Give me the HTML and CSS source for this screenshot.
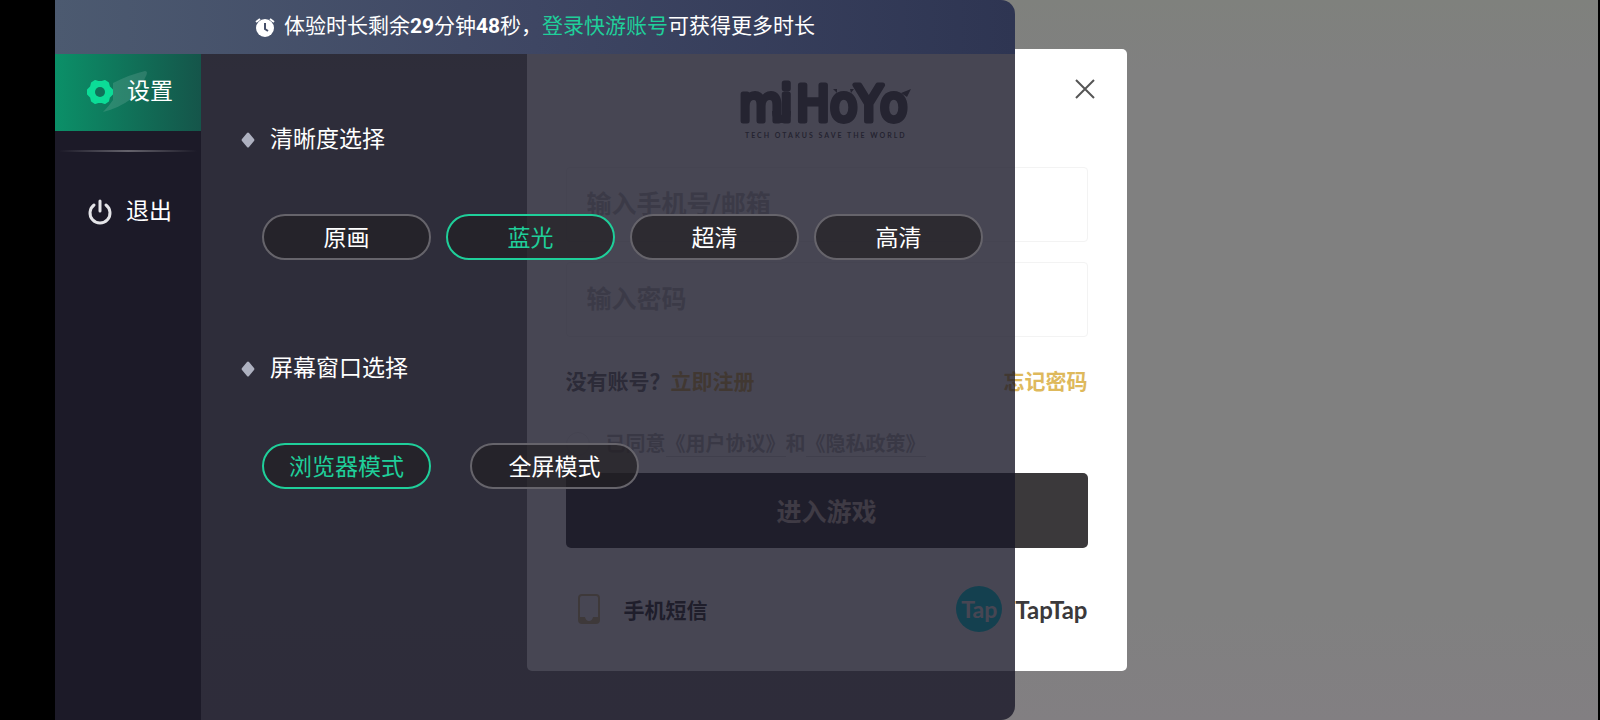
FILE: index.html
```html
<!DOCTYPE html>
<html lang="zh-CN">
<head>
    <meta charset="UTF-8">
    <meta name="viewport" content="width=device-width, initial-scale=1.0">
    <title>云游戏 - 设置</title>
    <link rel="stylesheet" href="styles.css">
</head>
<body>
    <!-- Login dialog, dimmed by the settings drawer -->
    <main class="stage">
        <form class="login">
            <div class="login-head">
                <svg class="logo" viewBox="0 0 176 68" width="176" height="68" role="img" aria-label="miHoYo">
                    <g class="logo-word">
                        <text x="0" y="48">m</text>
                        <text x="41" y="48">i</text>
                        <text x="57" y="48">H</text>
                        <text x="91" y="48">o</text>
                        <text x="116" y="48">Y</text>
                        <text x="141" y="48">o</text>
                    </g>
                    <path class="logo-hook" d="M37 38Q37 46 43 46Q48 46 48 38"/>
                    <path class="logo-ear" d="M94 16l4 0 0 4zM115 16l-4 0 1 4zM162 20l10-4-4 8z"/>
                    <text class="logo-tagline" x="6" y="65">TECH OTAKUS SAVE THE WORLD</text>
                </svg>
                <button type="button" class="close" aria-label="关闭">
                    <svg viewBox="0 0 22 22" width="22" height="22"><path d="M2 2L20 20M20 2L2 20"/></svg>
                </button>
            </div>

            <input class="field" type="text" placeholder="输入手机号/邮箱" aria-label="输入手机号/邮箱">
            <input class="field" type="password" placeholder="输入密码" aria-label="输入密码">

            <div class="account-row">
                <span>没有账号？<a href="#">立即注册</a></span>
                <a href="#">忘记密码</a>
            </div>

            <label class="agree">
                <input type="checkbox">
                <span>已同意<a href="#">《用户协议》</a>和<a href="#">《隐私政策》</a></span>
            </label>

            <button type="button" class="enter">进入游戏</button>

            <div class="other-login">
                <a href="#" class="sms">
                    <svg viewBox="0 0 24 32" width="24" height="32">
                        <rect x="2" y="2" width="20" height="28" rx="3"/>
                        <path class="phone-chin" d="M2 24H8Q9 28 12 28Q15 28 16 24H22V28L20 30H4L2 28Z"/>
                    </svg>
                    手机短信
                </a>
                <a href="#" class="taptap">
                    <span class="tap-badge">Tap</span>
                    TapTap
                </a>
            </div>
        </form>
    </main>

    <!-- Settings drawer -->
    <section class="drawer">
        <header class="banner">
            <svg viewBox="0 0 20 20" width="20" height="20">
                <path class="clock-ears" d="M1 5L5 2M19 5L15 2"/>
                <circle cx="10" cy="11" r="9"/>
                <path class="clock-hands" d="M10 6V12L13 14"/>
            </svg>
            <p>体验时长剩余<b>29</b>分钟<b>48</b>秒，<a href="#">登录快游账号</a>可获得更多时长</p>
        </header>

        <nav class="sidebar">
            <button type="button" class="nav-item active">
                <svg class="gear" viewBox="0 0 64 44" width="64" height="44">
                    <path class="comet" d="M26 13Q44 4 58 1Q62 1 58 8Q54 20 44 29Q32 38 16 42Q22 36 26 30Z"/>
                    <path class="cog" d="M8 11L11 12H15L18 11L21 13L22 17L25 20V24L22 27L21 31L18 33L15 32H11L8 33L5 31L4 27L1 24V20L4 17L5 13Z"/>
                    <circle class="cog-hole" cx="13" cy="22" r="5"/>
                </svg>
                <span>设置</span>
            </button>
            <hr class="divider">
            <button type="button" class="nav-item">
                <svg class="power" viewBox="0 0 26 26" width="26" height="26">
                    <path d="M7 6A10 10 0 1 0 19 6M13 2V12"/>
                </svg>
                <span>退出</span>
            </button>
        </nav>

        <div class="panel">
            <section class="group">
                <h2><svg viewBox="0 0 14 16" width="14" height="16"><path d="M6 1Q7 0 8 1L13 7Q14 8 13 9L8 15Q7 16 6 15L1 9Q0 8 1 7Z"/></svg>清晰度选择</h2>
                <div class="options">
                    <button type="button" class="pill">原画</button>
                    <button type="button" class="pill selected">蓝光</button>
                    <button type="button" class="pill">超清</button>
                    <button type="button" class="pill">高清</button>
                </div>
            </section>
            <section class="group">
                <h2><svg viewBox="0 0 14 16" width="14" height="16"><path d="M6 1Q7 0 8 1L13 7Q14 8 13 9L8 15Q7 16 6 15L1 9Q0 8 1 7Z"/></svg>屏幕窗口选择</h2>
                <div class="options wide">
                    <button type="button" class="pill selected">浏览器模式</button>
                    <button type="button" class="pill">全屏模式</button>
                </div>
            </section>
        </div>
    </section>
</body>
</html>
```

FILE: styles.css
```css
* {
    box-sizing: border-box;
}
body {
    margin: 0;
    padding: 0 2px 0 55px;
    min-height: 100vh;
    display: flex;
    background-color: #000;
    font-family: Roboto, "Noto Sans CJK SC", sans-serif;
    color: #fff;
    overflow: hidden;
}
button {
    font-family: inherit;
    cursor: pointer;
}
a {
    color: inherit;
    text-decoration: none;
}
svg {
    flex: none;
}

/* Login dialog */
.stage {
    flex: 1;
    display: flex;
    justify-content: center;
    align-items: center;
    background: linear-gradient(#7f817d, #808080 10%, #808080 85%, #827f82);
}
.login {
    width: 600px;
    padding: 24px 39px 39px;
    border-radius: 5px;
    background-color: #fff;
    color: #3b393b;
    font-weight: bold;
}
.login-head {
    position: relative;
    display: flex;
    justify-content: center;
    margin-bottom: 26px;
}
.logo-word {
    font-family: "DejaVu Sans Condensed", "DejaVu Sans", sans-serif;
    font-weight: normal;
    font-size: 50px;
    fill: #555;
    stroke: #555;
    stroke-width: 5px;
    stroke-linejoin: round;
}
.logo-hook {
    fill: none;
    stroke: #555;
    stroke-width: 8px;
}
.logo-ear {
    fill: #555;
}
.logo-tagline {
    font-family: Lato, sans-serif;
    font-size: 7px;
    letter-spacing: 2px;
    fill: #555;
}
.close {
    position: absolute;
    top: 5px;
    right: -8px;
    padding: 0;
    border: 0;
    background: none;
}
.close path {
    stroke: #555;
    stroke-width: 2;
}
.field {
    display: block;
    width: 100%;
    height: 75px;
    margin-bottom: 20px;
    padding: 0 20px;
    border: 1px solid #f3f3f3;
    border-radius: 4px;
    background: none;
    font: inherit;
    font-size: 25px;
}
.field::placeholder {
    color: #c4c4c4;
}
.account-row {
    display: flex;
    justify-content: space-between;
    margin-top: 30px;
    font-size: 21px;
    line-height: 30px;
    color: #777;
}
.account-row a {
    color: #deb95c;
}
.agree {
    display: flex;
    align-items: center;
    gap: 16px;
    margin: 32px 0 14px;
    font-size: 20px;
    line-height: 30px;
    color: #bbb;
}
.agree input {
    appearance: none;
    width: 24px;
    height: 24px;
    margin: 0;
    border: 1px solid #eee;
    border-radius: 50%;
}
.agree a {
    border-bottom: 1px solid #ddd;
}
.enter {
    display: block;
    width: 100%;
    height: 75px;
    padding: 0 0 2px;
    border: 0;
    border-radius: 5px;
    background-color: #3b393b;
    color: #d8c8b8;
    font-size: 25px;
    font-weight: bold;
}
.other-login {
    display: flex;
    justify-content: space-between;
    align-items: center;
    margin-top: 38px;
    font-size: 21px;
}
.other-login a {
    display: flex;
    align-items: center;
}
.sms {
    gap: 23px;
    padding-left: 11px;
}
.sms svg {
    fill: none;
    stroke: #d0bc84;
    stroke-width: 2;
}
.sms .phone-chin {
    fill: #d0bc84;
    stroke: none;
}
.taptap {
    gap: 13px;
    font-family: Lato, sans-serif;
    font-size: 24px;
}
.tap-badge {
    width: 46px;
    height: 46px;
    border-radius: 50%;
    background-color: #00e0e8;
    color: #fff;
    font-size: 23px;
    line-height: 46px;
    text-align: center;
}

/* Settings drawer */
.drawer {
    position: absolute;
    top: 0;
    left: 55px;
    bottom: 0;
    width: 60%;
    display: grid;
    grid-template: 54px 1fr / 146px 1fr;
    border-radius: 0 14px 14px 0;
    overflow: hidden;
}
.banner {
    grid-column: 1 / 3;
    display: flex;
    justify-content: center;
    align-items: center;
    gap: 9px;
    background: linear-gradient(90deg, #4c5a70, #3e4663 50%, #2e3552);
    font-size: 21px;
}
.banner p {
    margin: 0;
    padding-bottom: 6px;
}
.banner a {
    color: #1fcf9a;
}
.banner circle {
    fill: #fff;
}
.clock-ears {
    stroke: #fff;
    stroke-width: 2;
}
.clock-hands {
    fill: none;
    stroke: #46506a;
    stroke-width: 2;
}
.sidebar {
    background-color: #1c1a28;
}
.nav-item {
    display: flex;
    align-items: center;
    width: 100%;
    height: 77px;
    padding: 0 0 2px 32px;
    border: 0;
    background: none;
    color: #fff;
    font-size: 23px;
}
.nav-item span {
    padding-bottom: 5px;
}
.nav-item.active {
    background: linear-gradient(90deg, #0b9068, #15554a);
}
.gear {
    margin-right: -24px;
}
.comet {
    fill: #fff;
    fill-opacity: 0.12;
}
.cog {
    fill: #0cdc97;
    stroke: #0cdc97;
    stroke-width: 2;
    stroke-linejoin: round;
}
.cog-hole {
    fill: #0f7259;
}
.power {
    margin-right: 13px;
}
.power path {
    fill: none;
    stroke: #e4e4e8;
    stroke-width: 3;
    stroke-linecap: round;
}
.divider {
    height: 2px;
    margin: 19px 4px 22px;
    border: 0;
    background: linear-gradient(90deg, transparent, #65636c, transparent);
}
.panel {
    padding: 69px 31px 0 40px;
    background-color: rgba(25, 24, 40, 0.8);
}
.group {
    margin-bottom: 92px;
}
.group h2 {
    display: flex;
    align-items: center;
    gap: 15px;
    margin: 0 0 57px;
    font-size: 23px;
    font-weight: normal;
    line-height: 34px;
}
.group h2 path {
    fill: #aeb1c0;
}
.options {
    display: flex;
    gap: 15px;
    padding-left: 21px;
}
.options.wide {
    gap: 39px;
}
.pill {
    width: 169px;
    height: 46px;
    padding: 0 0 2px;
    border: 2px solid #66646b;
    border-radius: 23px;
    background-color: rgba(34, 32, 36, 0.7);
    color: #fff;
    font-size: 23px;
}
.pill.selected {
    border-color: #1fcf9a;
    color: #1fcf9a;
}
```
